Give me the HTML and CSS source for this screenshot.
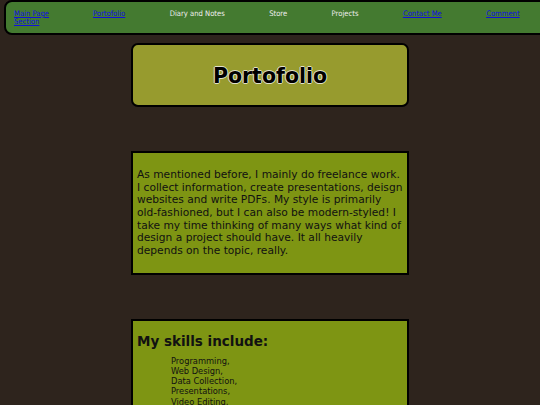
FILE: index.html
```html
<!DOCTYPE html>
<html>
<head>
<meta charset="utf-8">
<title>Portofolio</title>
<link rel="stylesheet" href="styles.css">
</head>
<body>
<nav class="topnav">
  <a class="nav-item nav-first" href="#">Main Page Section</a>
  <a class="nav-item" href="#">Portofolio</a>
  <span class="nav-item nav-plain">Diary and Notes</span>
  <span class="nav-item nav-plain">Store</span>
  <span class="nav-item nav-plain">Projects</span>
  <a class="nav-item" href="#">Contact Me</a>
  <a class="nav-item" href="#">Comment</a>
</nav>
<header class="title-box">
  <h1 class="title">Portofolio</h1>
</header>
<section class="card">
  <p class="card-text">As mentioned before, I mainly do freelance work. I collect information, create presentations, deisgn websites and write PDFs. My style is primarily old-fashioned, but I can also be modern-styled! I take my time thinking of many ways what kind of design a project should have. It all heavily depends on the topic, really.</p>
</section>
<section class="card card-skills">
  <h2 class="skills-title">My skills include:</h2>
  <ul class="skills-list">
    <li>Programming,</li>
    <li>Web Design,</li>
    <li>Data Collection,</li>
    <li>Presentations,</li>
    <li>Video Editing,</li>
    <li>Writing.</li>
  </ul>
</section>
</body>
</html>
```
FILE: styles.css
```css
html {
  scrollbar-width: none;
  overflow: hidden;
}
body {
  margin: 0;
  background: #2e241d;
  font-family: "DejaVu Sans", Verdana, sans-serif;
  color: #111;
}
.topnav {
  display: flex;
  gap: 44.4px;
  align-items: flex-start;
  margin: 0 -20px 0 4px;
  padding: 8px 8px 7px 8px;
  background: #447a30;
  border: 2px solid #000;
  border-radius: 8px;
  font-family: "DejaVu Sans Condensed", "DejaVu Sans", sans-serif;
  font-size: 7.6px;
  line-height: 8px;
}
.nav-item {
  color: #1010dd;
  white-space: nowrap;
}
.nav-first {
  white-space: normal;
  flex: none;
  width: 37px;
  margin-right: -2.4px;
}
.nav-plain {
  color: #eeeeee;
}
.title-box {
  box-sizing: border-box;
  width: 278px;
  height: 64px;
  margin: 8px auto 0;
  background: #979b2e;
  border: 2px solid #000;
  border-radius: 7px;
  display: flex;
  align-items: center;
  justify-content: center;
}
.title {
  margin: 2px 0 0;
  font-size: 20.5px;
  font-weight: bold;
  color: #000;
  text-shadow: 1px 0 0 #e0e0c8, -1px 0 0 #e0e0c8, 0 1px 0 #e0e0c8, 0 -1px 0 #e0e0c8;
}
.card {
  box-sizing: border-box;
  width: 278px;
  margin: 44px auto 0;
  padding: 4px;
  background: #7e9513;
  border: 2px solid #000;
}
.card-text {
  margin: 12px 0 11px;
  font-size: 10.67px;
  line-height: 12.67px;
}
.skills-title {
  margin: 8px 0 7px;
  font-size: 13.5px;
  font-weight: bold;
}
.skills-list {
  list-style: none;
  margin: 0;
  padding-left: 34px;
  font-size: 8.3px;
  line-height: 10.2px;
}
```
